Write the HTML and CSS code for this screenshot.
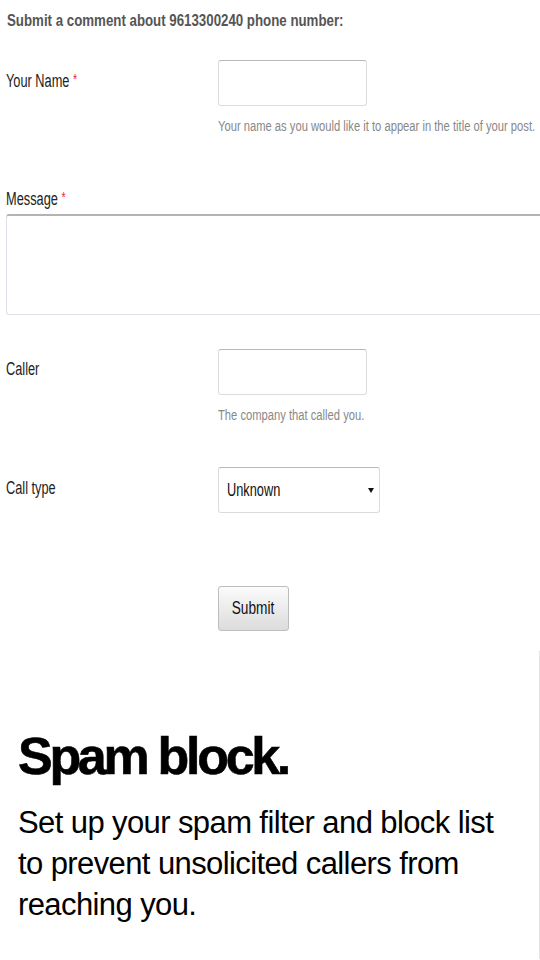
FILE: index.html
```html
<!DOCTYPE html>
<html lang="en">
<head>
<meta charset="utf-8">
<title>Submit a comment</title>
<link rel="stylesheet" href="styles.css">
</head>
<body>
<form class="comment-form">
  <h3 class="form-title"><span class="cond cond-title">Submit a comment about 9613300240 phone number:</span></h3>

  <div class="field">
    <label class="field-label"><span class="cond">Your Name <span class="req">*</span></span></label>
    <div class="field-control">
      <input class="text-input" type="text">
      <p class="hint"><span class="cond cond-hint">Your name as you would like it to appear in the title of your post.</span></p>
    </div>
  </div>

  <div class="field field-wide">
    <label class="field-label"><span class="cond">Message <span class="req">*</span></span></label>
    <textarea class="message"></textarea>
  </div>

  <div class="field">
    <label class="field-label"><span class="cond">Caller</span></label>
    <div class="field-control">
      <input class="text-input" type="text">
      <p class="hint"><span class="cond cond-hint">The company that called you.</span></p>
    </div>
  </div>

  <div class="field field-select">
    <label class="field-label"><span class="cond">Call type</span></label>
    <div class="field-control">
      <div class="select" role="combobox" aria-expanded="false">
        <span class="cond">Unknown</span>
      </div>
    </div>
  </div>

  <div class="field field-submit">
    <span class="field-label"></span>
    <div class="field-control">
      <button class="submit" type="button"><span class="cond cond-center">Submit</span></button>
    </div>
  </div>
</form>

<section class="promo">
  <h2 class="promo-title">Spam block.</h2>
  <p class="promo-text">Set up your spam filter and block list to prevent unsolicited callers from reaching you.</p>
</section>
</body>
</html>
```

FILE: styles.css
```css
html, body {
  margin: 0;
  padding: 0;
  background: #ffffff;
}

body {
  width: 540px;
  overflow: hidden;
  font-family: "Liberation Sans", Arial, sans-serif;
}

.cond {
  display: inline-block;
  white-space: nowrap;
  transform: scaleX(0.71);
  transform-origin: left center;
}

.cond-title {
  transform: scaleX(0.83);
}

.cond-hint {
  transform: scaleX(0.8);
}

.cond-center {
  transform: scaleX(0.76);
  transform-origin: center center;
}

.comment-form {
  padding: 11px 0 0 6px;
}

.form-title {
  margin: 0 0 29px 1px;
  font-size: 16px;
  line-height: 20px;
  font-weight: bold;
  color: #555555;
}

.field {
  display: grid;
  grid-template-columns: 212px 1fr;
  align-items: start;
}

.field-label {
  display: block;
  padding-top: 9px;
  font-size: 18px;
  line-height: 20px;
  color: #222222;
}

.req {
  color: #e8262b;
  font-size: 15px;
  vertical-align: 3px;
}

.text-input {
  display: block;
  box-sizing: border-box;
  width: 149px;
  height: 46px;
  margin: 0;
  border: 1px solid #dcdcdc;
  border-top-color: #b8b8b8;
  border-radius: 3px;
  background: #ffffff;
}

.hint {
  margin: 11px 0 0 0;
  font-size: 14px;
  line-height: 18px;
  color: #888888;
  white-space: nowrap;
}

.field-wide {
  display: block;
  margin-top: 52px;
}

.field-wide .field-label {
  padding-top: 0;
  margin-bottom: 5px;
}

.message {
  display: block;
  box-sizing: border-box;
  width: 545px;
  height: 101px;
  margin: 0;
  border: 1px solid #dde0e6;
  border-top: 2px solid #b3b3b3;
  border-radius: 3px 0 0 3px;
  resize: none;
  background: #ffffff;
}

.field-wide + .field {
  margin-top: 34px;
}

.field-wide + .field .field-label {
  padding-top: 10px;
}

.field-select {
  margin-top: 43px;
}

.field-select .field-label {
  padding-top: 11px;
}

.select {
  position: relative;
  box-sizing: border-box;
  width: 162px;
  height: 46px;
  padding: 0 0 0 8px;
  border: 1px solid #dcdcdc;
  border-top-color: #b8b8b8;
  border-radius: 3px;
  background: #ffffff;
  font-size: 18px;
  line-height: 44px;
  color: #111111;
}

.select::after {
  content: "";
  position: absolute;
  right: 5px;
  top: 20px;
  border-left: 3.5px solid transparent;
  border-right: 3.5px solid transparent;
  border-top: 5px solid #111111;
}

.field-submit {
  margin-top: 73px;
}

.field-submit .field-label {
  padding: 0;
}

.submit {
  display: block;
  box-sizing: border-box;
  width: 71px;
  height: 45px;
  margin: 0;
  padding: 0;
  border: 1px solid #bdbdbd;
  border-radius: 3px;
  background: linear-gradient(#fbfbfb, #dcdcdc);
  font-family: inherit;
  font-size: 18px;
  color: #111111;
}

.promo {
  margin-top: 20px;
  box-sizing: border-box;
  width: 540px;
  height: 308px;
  padding: 77px 0 0 18px;
  border-right: 1px solid #e4e4e4;
  color: #000000;
}

.promo-title {
  margin: 0 0 18px 0;
  font-size: 52px;
  line-height: 56px;
  font-weight: bold;
  letter-spacing: -3.3px;
  -webkit-text-stroke: 0.6px #000000;
}

.promo-text {
  margin: 0;
  width: 490px;
  font-size: 31px;
  line-height: 41px;
  letter-spacing: -0.6px;
}
```
